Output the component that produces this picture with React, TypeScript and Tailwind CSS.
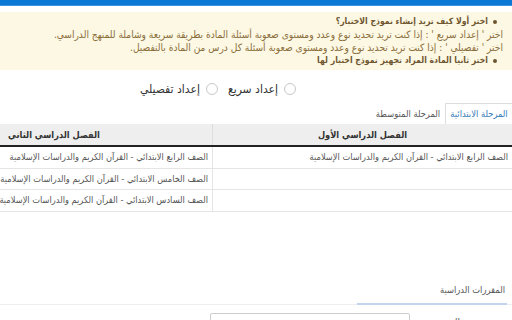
const rowsFirst = ["الصف الرابع الابتدائي - القرآن الكريم والدراسات الإسلامية", "", ""];
const rowsSecond = [
  "الصف الرابع الابتدائي - القرآن الكريم والدراسات الإسلامية",
  "الصف الخامس الابتدائي - القرآن الكريم والدراسات الإسلامية",
  "الصف السادس الابتدائي - القرآن الكريم والدراسات الإسلامية",
];

function Radio({ label }: { label: string }) {
  return (
    <label className="flex items-center gap-[6px]">
      <span className="w-[12px] h-[12px] rounded-full border border-[#c8c8c8] bg-white" />
      <span className="text-[12px] text-[#333]">{label}</span>
    </label>
  );
}

function Bullet({ text }: { text: string }) {
  return (
    <div className="flex items-center h-[13px] pr-[6px] text-[8.6px] font-bold text-[#6e5530]">
      <span className="w-[4px] h-[4px] rounded-full bg-[#6e5530] ml-[5px]" />
      <span>{text}</span>
    </div>
  );
}

export default function App() {
  return (
    <div dir="rtl" className="w-[512px] h-[320px] overflow-hidden bg-white font-['DejaVu_Sans_Condensed','DejaVu_Sans',sans-serif]">
      <div className="h-[6px] bg-[#0a78d4] border-b border-[#3b93e0]" />
      <div className="mt-[6px] h-[58px] bg-[#fcf8e3] text-[#8a6d3b] text-[10.1px] leading-[13px] pt-[3px] pr-[9px]">
        <Bullet text="اختر أولا كيف تريد إنشاء نموذج الاختبار؟" />
        <div className="h-[13px] whitespace-nowrap">اختر ' إعداد سريع ' : إذا كنت تريد تحديد نوع وعدد ومستوى صعوبة أسئلة المادة بطريقة سريعة وشاملة للمنهج الدراسي.</div>
        <div className="h-[13px] whitespace-nowrap">اختر ' تفصيلي ' : إذا كنت تريد تحديد نوع وعدد ومستوى صعوبة أسئلة كل درس من المادة بالتفصيل.</div>
        <Bullet text="اختر ثانيا المادة المراد تجهيز نموذج اختبار لها" />
      </div>

      <div className="flex gap-[10px] pr-[216px] mt-[12px] h-[14px] items-center">
        <Radio label="إعداد سريع" />
        <Radio label="إعداد تفصيلي" />
      </div>

      <div className="flex mt-[7px] h-[21px] text-[9.3px]">
        <div className="w-[67px] border-t border-l border-[#ddd] bg-white text-[#337ab7] flex items-center justify-center">المرحلة الابتدائية</div>
        <div className="w-[74px] text-[#555] flex items-center justify-center">المرحلة المتوسطة</div>
      </div>

      <div className="w-[616px] text-[9.2px]">
        <div className="flex h-[23px] bg-[#eee] border-b-2 border-[#222] font-bold text-[#333]">
          <div className="w-[300px] border-l border-[#ddd] flex items-center justify-center">الفصل الدراسي الأول</div>
          <div className="flex-1 flex items-center justify-center">الفصل الدراسي الثاني</div>
        </div>
        {rowsSecond.map((r, i) => (
          <div key={i} className="flex h-[21.5px] border-b border-[#e5e5e5] text-[#555]">
            <div className="w-[300px] border-l border-[#e5e5e5] flex items-center px-[4px]">{rowsFirst[i]}</div>
            <div className="flex-1 flex items-center px-[4px]">{r}</div>
          </div>
        ))}
      </div>

      <div className="mt-[71px] flex border-b border-[#eee] h-[22px]">
        <div className="w-[150px] mr-[5px] border-b-2 border-[#c4d4ef] -mb-px text-[9.3px] text-[#555] pr-[2px]">المقررات الدراسية</div>
      </div>

      <div className="flex mt-[8px] items-start">
        <div className="w-[102px] text-[10px] text-[#555] pr-[52px] pt-[2px]">التخصص</div>
        <div className="w-[200px] h-[24px] border border-[#ccc] rounded-[2px] bg-white" />
      </div>
    </div>
  );
}
